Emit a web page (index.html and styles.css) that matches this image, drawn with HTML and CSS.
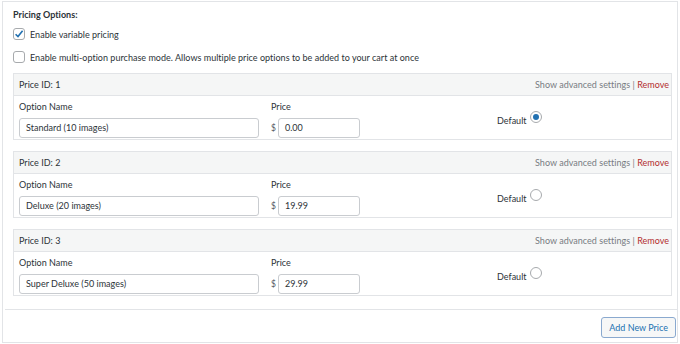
FILE: index.html
```html
<!DOCTYPE html>
<html lang="en">
<head>
    <meta charset="UTF-8">
    <title>Pricing Options</title>
    <link rel="stylesheet" href="styles.css">
</head>
<body>
    <div class="panel">
        <div class="options">
            <div class="title">Pricing Options:</div>
            <label class="check-row">
                <span class="checkbox checked">
                    <svg width="10" height="10" viewBox="0 0 10 10"><path d="M1.6 5.2 L4 7.6 L8.6 1.8" fill="none" stroke="#2271b1" stroke-width="1.6"/></svg>
                </span>
                Enable variable pricing
            </label>
            <label class="check-row">
                <span class="checkbox"></span>
                Enable multi-option purchase mode. Allows multiple price options to be added to your cart at once
            </label>

            <div class="price-row">
                <div class="row-head">
                    <span>Price ID: 1</span>
                    <span class="actions">Show advanced settings | <a class="remove">Remove</a></span>
                </div>
                <div class="row-body">
                    <div class="field name-field">
                        <div class="label">Option Name</div>
                        <div class="input">Standard (10 images)</div>
                    </div>
                    <div class="field price-field">
                        <div class="label">Price</div>
                        <div class="money"><span class="currency">$</span><div class="input">0.00</div></div>
                    </div>
                    <div class="default">Default <span class="radio checked"></span></div>
                </div>
            </div>

            <div class="price-row">
                <div class="row-head">
                    <span>Price ID: 2</span>
                    <span class="actions">Show advanced settings | <a class="remove">Remove</a></span>
                </div>
                <div class="row-body">
                    <div class="field name-field">
                        <div class="label">Option Name</div>
                        <div class="input">Deluxe (20 images)</div>
                    </div>
                    <div class="field price-field">
                        <div class="label">Price</div>
                        <div class="money"><span class="currency">$</span><div class="input">19.99</div></div>
                    </div>
                    <div class="default">Default <span class="radio"></span></div>
                </div>
            </div>

            <div class="price-row">
                <div class="row-head">
                    <span>Price ID: 3</span>
                    <span class="actions">Show advanced settings | <a class="remove">Remove</a></span>
                </div>
                <div class="row-body">
                    <div class="field name-field">
                        <div class="label">Option Name</div>
                        <div class="input">Super Deluxe (50 images)</div>
                    </div>
                    <div class="field price-field">
                        <div class="label">Price</div>
                        <div class="money"><span class="currency">$</span><div class="input">29.99</div></div>
                    </div>
                    <div class="default">Default <span class="radio"></span></div>
                </div>
            </div>
        </div>
        <div class="footer">
            <button class="add-button">Add New Price</button>
        </div>
    </div>
</body>
</html>
```

FILE: styles.css
```css
body {
    margin: 0;
    background-color: #fff;
    color: #2c3338;
    font-family: Lato, "Noto Sans", sans-serif;
    font-size: 9px;
    letter-spacing: 0.02px;
}
.panel {
    margin: 1px 2px 1px 2px;
    border: 1px solid #e2e4e7;
    height: 342px;
    box-sizing: border-box;
    display: flex;
    flex-direction: column;
}
.options {
    padding: 6px 5px 0 10px;
    flex: 1;
}
.title {
    font-weight: 700;
    height: 14px;
    line-height: 14px;
    margin-bottom: 6px;
}
.check-row {
    display: flex;
    align-items: center;
    gap: 5px;
    height: 12px;
    margin-bottom: 11px;
}
.check-row:last-of-type {
    margin-bottom: 10px;
}
.checkbox {
    width: 10px;
    height: 10px;
    border: 1px solid #a7aaad;
    border-radius: 3px;
    display: flex;
    align-items: center;
    justify-content: center;
    background: #fff;
}
.price-row {
    border: 1px solid #e2e4e7;
    margin-bottom: 11px;
}
.row-head {
    display: flex;
    justify-content: space-between;
    align-items: center;
    height: 21px;
    padding: 0 2px 0 5px;
    background-color: #f5f6f6;
    border-bottom: 1px solid #e2e4e7;
}
.actions {
    color: #787c82;
}
.remove {
    color: #b32d2e;
}
.row-body {
    display: flex;
    align-items: flex-start;
    height: 43px;
    padding: 0 5px;
}
.field {
    display: flex;
    flex-direction: column;
}
.label {
    height: 12px;
    line-height: 12px;
    margin: 5px 0 5px;
}
.input {
    height: 20px;
    box-sizing: border-box;
    border: 1px solid #c9ccd0;
    border-radius: 3px;
    padding: 0 6px;
    line-height: 18px;
    background: #fff;
}
.name-field {
    width: 240px;
    margin-right: 12px;
}
.money {
    display: flex;
    align-items: center;
}
.currency {
    color: #50575e;
    font-size: 8.5px;
    margin-right: 2px;
}
.price-field .input {
    width: 82px;
}
.default {
    display: flex;
    align-items: center;
    gap: 3px;
    margin-left: 137px;
    margin-top: 18px;
}
.radio {
    width: 10px;
    height: 10px;
    border: 1px solid #a7aaad;
    border-radius: 50%;
    position: relative;
    top: -3px;
}
.radio.checked::after {
    content: "";
    position: absolute;
    left: 2px;
    top: 2px;
    width: 6px;
    height: 6px;
    border-radius: 50%;
    background: #2271b1;
}
.footer {
    border-top: 1px solid #e2e4e7;
    margin-left: 2px;
    height: 32px;
    display: flex;
    justify-content: flex-end;
    align-items: center;
    padding-right: 1px;
}
.add-button {
    font-family: inherit;
    font-size: 9px;
    color: #2271b1;
    background: #f6f7f7;
    border: 1px solid #8aa9cf;
    border-radius: 3px;
    height: 21px;
    padding: 0 7px;
    margin-top: 2px;
}
```
